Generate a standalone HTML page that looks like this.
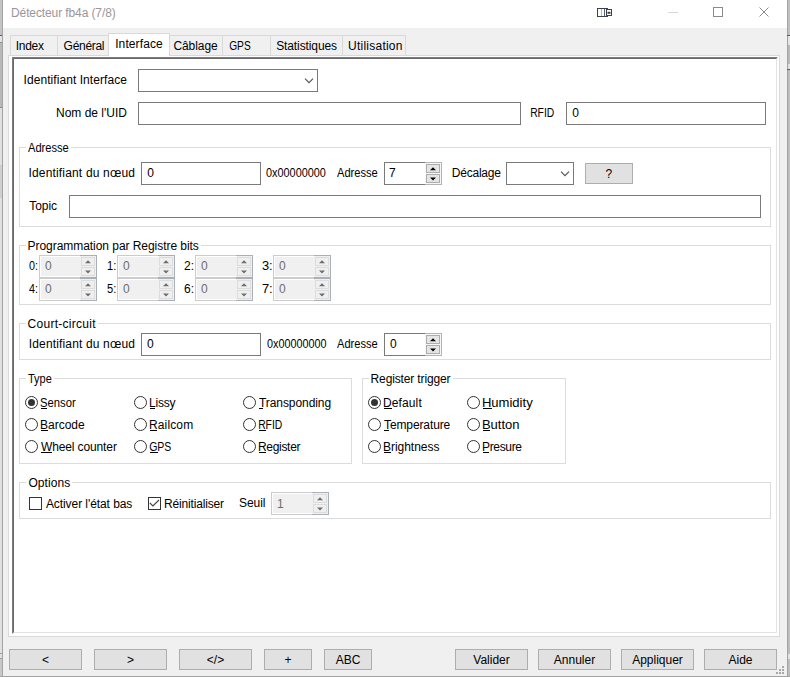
<!DOCTYPE html><html><head><meta charset="utf-8"><style>
html,body{margin:0;padding:0}body{width:790px;height:677px;position:relative;overflow:hidden;background:#f0f0f0;font-family:"Liberation Sans", sans-serif;font-size:12px;color:#000}
div,svg{position:absolute;box-sizing:border-box}.t{line-height:14px;white-space:nowrap}
</style></head><body>
<div style="left:0px;top:0px;width:2px;height:35px;background:#c4c4c4"></div>
<div style="left:0px;top:35px;width:2px;height:1px;background:#5c5c5c"></div>
<div style="left:0px;top:36px;width:2px;height:6px;background:#e2e2e2"></div>
<div style="left:0px;top:42px;width:2px;height:1px;background:#8c8c8c"></div>
<div style="left:0px;top:43px;width:2px;height:64px;background:#b8b8b8"></div>
<div style="left:0px;top:107px;width:2px;height:1px;background:#8c8c8c"></div>
<div style="left:0px;top:108px;width:2px;height:57px;background:#e0e0e0"></div>
<div style="left:0px;top:165px;width:2px;height:33px;background:#cfcfcf"></div>
<div style="left:0px;top:198px;width:2px;height:455px;background:#e0e0e0"></div>
<div style="left:0px;top:653px;width:2px;height:1px;background:#a0a0a0"></div>
<div style="left:0px;top:654px;width:2px;height:4px;background:#e0e0e0"></div>
<div style="left:0px;top:658px;width:2px;height:1px;background:#a0a0a0"></div>
<div style="left:0px;top:659px;width:2px;height:18px;background:#c8c8c8"></div>
<div style="left:2px;top:0px;width:1px;height:677px;background:#a4a4a4"></div>
<div style="left:788px;top:0px;width:2px;height:35px;background:#c0c0c0"></div>
<div style="left:787px;top:35px;width:3px;height:1px;background:#5c5c5c"></div>
<div style="left:788px;top:36px;width:2px;height:9px;background:#e4e4e4"></div>
<div style="left:788px;top:45px;width:2px;height:19px;background:#b8b8b8"></div>
<div style="left:788px;top:64px;width:2px;height:5px;background:#e0e0e0"></div>
<div style="left:787px;top:69px;width:3px;height:1px;background:#5c5c5c"></div>
<div style="left:788px;top:70px;width:2px;height:584px;background:#bdbdbd"></div>
<div style="left:788px;top:654px;width:2px;height:5px;background:#e2e2e2"></div>
<div style="left:788px;top:659px;width:2px;height:18px;background:#bdbdbd"></div>
<div style="left:787px;top:0px;width:1px;height:35px;background:#a4a4a4"></div>
<div style="left:787px;top:36px;width:1px;height:33px;background:#a4a4a4"></div>
<div style="left:787px;top:70px;width:1px;height:607px;background:#a4a4a4"></div>
<div style="left:0px;top:676px;width:790px;height:1px;background:#a4a4a4"></div>
<div style="left:3px;top:0px;width:784px;height:28px;background:#fff"></div>
<div class="t" style="left:11px;top:6px;color:#9c9696;letter-spacing:-0.105px;">Détecteur fb4a (7/8)</div>
<svg style="left:590px;top:0px" width="30" height="28" viewBox="0 0 30 28"><rect x="7.5" y="8.5" width="10" height="8" fill="#fff" stroke="#3c4150" stroke-width="1"/><line x1="11.5" y1="9" x2="11.5" y2="16" stroke="#b4b7bf" stroke-width="1"/><line x1="14.5" y1="9" x2="14.5" y2="16" stroke="#5a5e6b" stroke-width="1"/><rect x="16.5" y="9.5" width="5" height="6" fill="#fff" stroke="#3c4150" stroke-width="1"/><rect x="17.5" y="11.8" width="3" height="2" fill="#3c4150"/></svg>
<div style="left:668px;top:12px;width:10px;height:1px;background:#d8d8d8"></div>
<svg style="left:712px;top:6px" width="12" height="12" viewBox="0 0 12 12"><rect x="1.5" y="1.5" width="9" height="9" fill="none" stroke="#8a8a8a" stroke-width="1"/></svg>
<svg style="left:758px;top:6px" width="12" height="12" viewBox="0 0 12 12"><path d="M1.5 1.5 L10.5 10.5 M10.5 1.5 L1.5 10.5" fill="none" stroke="#8a8a8a" stroke-width="1"/></svg>
<div style="left:10px;top:35px;width:48px;height:22px;border:1px solid #d9d9d9;border-bottom:none;background:#f0f0f0"></div>
<div class="t" style="left:15.7px;top:39px;letter-spacing:-0.25px;">Index</div>
<div style="left:57px;top:35px;width:52px;height:22px;border:1px solid #d9d9d9;border-bottom:none;background:#f0f0f0"></div>
<div class="t" style="left:63.6px;top:39px;letter-spacing:-0.3px;">Général</div>
<div style="left:169px;top:35px;width:54px;height:22px;border:1px solid #d9d9d9;border-bottom:none;background:#f0f0f0"></div>
<div class="t" style="left:173.4px;top:39px;letter-spacing:-0.067px;">Câblage</div>
<div style="left:222px;top:35px;width:49px;height:22px;border:1px solid #d9d9d9;border-bottom:none;background:#f0f0f0"></div>
<div class="t" style="left:228.6px;top:39px;transform:scaleX(0.85);transform-origin:1px 0;">GPS</div>
<div style="left:270px;top:35px;width:73px;height:22px;border:1px solid #d9d9d9;border-bottom:none;background:#f0f0f0"></div>
<div class="t" style="left:276.2px;top:39px;letter-spacing:-0.109px;">Statistiques</div>
<div style="left:342px;top:35px;width:64px;height:22px;border:1px solid #d9d9d9;border-bottom:none;background:#f0f0f0"></div>
<div class="t" style="left:348.1px;top:39px;letter-spacing:0.23px;">Utilisation</div>
<div style="left:8px;top:55px;width:772px;height:582px;border:1px solid #d9d9d9;background:#fff"></div>
<div style="left:108px;top:33px;width:62px;height:23px;border:1px solid #d9d9d9;border-bottom:none;background:#fff"></div>
<div class="t" style="left:115.2px;top:37px;letter-spacing:0.1px;">Interface</div>
<div style="left:12px;top:57px;width:766px;height:577px;border-top:1px solid #7c7c7c;border-left:1px solid #7c7c7c;border-right:1px solid #fff;border-bottom:1px solid #fff"></div>
<div style="left:13px;top:58px;width:764px;height:575px;border-top:1px solid #696969;border-left:1px solid #696969;border-right:1px solid #e3e3e3;border-bottom:1px solid #e3e3e3"></div>
<div class="t" style="left:23.5px;top:73px;letter-spacing:0.07px;">Identifiant Interface</div>
<div style="left:138px;top:69px;width:180px;height:23px;border:1px solid #7a7a7a;background:#fff"></div>
<svg style="left:304px;top:76px" width="10" height="8" viewBox="0 0 10 8"><path d="M1 2.6 L5 6.6 L9 2.6" fill="none" stroke="#505050" stroke-width="1.1"/></svg>
<div class="t" style="left:56px;top:106px;">Nom de l'UID</div>
<div style="left:138px;top:102px;width:383px;height:23px;border:1px solid #7a7a7a;background:#fff"></div>
<div class="t" style="left:530.4px;top:106px;transform:scaleX(0.863);transform-origin:1px 0;">RFID</div>
<div style="left:566px;top:102px;width:200px;height:23px;border:1px solid #7a7a7a;background:#fff"></div>
<div class="t" style="left:572.3px;top:106px;">0</div>
<div style="left:19px;top:147px;width:752px;height:80px;border:1px solid #dcdcdc"></div>
<div style="left:26px;top:147px;width:45px;height:1px;background:#fff"></div>
<div class="t" style="left:28.2px;top:141px;transform:scaleX(0.925);transform-origin:0px 0;">Adresse</div>
<div class="t" style="left:28.5px;top:166px;letter-spacing:0.167px;">Identifiant du nœud</div>
<div style="left:141px;top:162px;width:120px;height:23px;border:1px solid #7a7a7a;background:#fff"></div>
<div class="t" style="left:147.2px;top:166px;">0</div>
<div class="t" style="left:266.2px;top:166px;transform:scaleX(0.9061);transform-origin:0px 0;">0x00000000</div>
<div class="t" style="left:337.3px;top:166px;transform:scaleX(0.925);transform-origin:0px 0;">Adresse</div>
<div style="left:384px;top:162px;width:58px;height:23px;border:1px solid #7a7a7a;background:#fff"></div>
<div style="left:425px;top:162px;width:17px;height:23px;border:1px solid #b4b4b4;border-left:none;background:#f7f7f7"></div>
<div style="left:426px;top:164px;width:14px;height:9px;border:1px solid #adadad;background:#e5e5e5"></div>
<div style="left:426px;top:174px;width:14px;height:9px;border:1px solid #adadad;background:#e5e5e5"></div>
<svg style="left:429.0px;top:167px" width="8" height="4" viewBox="0 0 8 4"><path d="M1 3.2 L4 0.2 L7 3.2 Z" fill="#000"/></svg>
<svg style="left:429.0px;top:177px" width="8" height="4" viewBox="0 0 8 4"><path d="M1 0.5 L4 3.5 L7 0.5 Z" fill="#000"/></svg>
<div class="t" style="left:389px;top:166px;">7</div>
<div class="t" style="left:451.7px;top:166px;letter-spacing:-0.2px;">Décalage</div>
<div style="left:506px;top:162px;width:68px;height:23px;border:1px solid #7a7a7a;background:#fff"></div>
<svg style="left:560px;top:169px" width="10" height="8" viewBox="0 0 10 8"><path d="M1 2.6 L5 6.6 L9 2.6" fill="none" stroke="#505050" stroke-width="1.1"/></svg>
<div style="left:585px;top:163px;width:48px;height:21px;border:1px solid #adadad;background:#e1e1e1"></div>
<div class="t" style="left:605.4px;top:167px;">?</div>
<div class="t" style="left:29.2px;top:199px;letter-spacing:-0.05px;">Topic</div>
<div style="left:69px;top:195px;width:692px;height:23px;border:1px solid #7a7a7a;background:#fff"></div>
<div style="left:19px;top:245px;width:752px;height:60px;border:1px solid #dcdcdc"></div>
<div style="left:26px;top:245px;width:175px;height:1px;background:#fff"></div>
<div class="t" style="left:27.6px;top:239px;letter-spacing:-0.05px;">Programmation par Registre bits</div>
<div class="t" style="left:29.1px;top:259px;transform:scaleX(0.9);transform-origin:0px 0;">0:</div>
<div style="left:39px;top:255px;width:58px;height:23px;border:1px solid #cccccc;background:#f0f0f0;box-shadow:inset 0 0 0 1px #fff"></div>
<div style="left:80px;top:255px;width:17px;height:23px;border:1px solid #aab0b8;border-left:none;background:#f0f0f0"></div>
<div style="left:81px;top:257px;width:14px;height:9px;border:1px solid #dcdcdc;background:#efefef"></div>
<div style="left:81px;top:267px;width:14px;height:9px;border:1px solid #dcdcdc;background:#efefef"></div>
<svg style="left:84.0px;top:260px" width="8" height="4" viewBox="0 0 8 4"><path d="M1 3.2 L4 0.2 L7 3.2 Z" fill="#6d6d6d"/></svg>
<svg style="left:84.0px;top:270px" width="8" height="4" viewBox="0 0 8 4"><path d="M1 0.5 L4 3.5 L7 0.5 Z" fill="#6d6d6d"/></svg>
<div class="t" style="left:45px;top:259px;color:#6d6d6d;">0</div>
<div class="t" style="left:106.9px;top:259px;transform:scaleX(0.925);transform-origin:1px 0;">1:</div>
<div style="left:117px;top:255px;width:58px;height:23px;border:1px solid #cccccc;background:#f0f0f0;box-shadow:inset 0 0 0 1px #fff"></div>
<div style="left:158px;top:255px;width:17px;height:23px;border:1px solid #aab0b8;border-left:none;background:#f0f0f0"></div>
<div style="left:159px;top:257px;width:14px;height:9px;border:1px solid #dcdcdc;background:#efefef"></div>
<div style="left:159px;top:267px;width:14px;height:9px;border:1px solid #dcdcdc;background:#efefef"></div>
<svg style="left:162.0px;top:260px" width="8" height="4" viewBox="0 0 8 4"><path d="M1 3.2 L4 0.2 L7 3.2 Z" fill="#6d6d6d"/></svg>
<svg style="left:162.0px;top:270px" width="8" height="4" viewBox="0 0 8 4"><path d="M1 0.5 L4 3.5 L7 0.5 Z" fill="#6d6d6d"/></svg>
<div class="t" style="left:123px;top:259px;color:#6d6d6d;">0</div>
<div class="t" style="left:184px;top:259px;letter-spacing:0.2px;">2:</div>
<div style="left:195px;top:255px;width:58px;height:23px;border:1px solid #cccccc;background:#f0f0f0;box-shadow:inset 0 0 0 1px #fff"></div>
<div style="left:236px;top:255px;width:17px;height:23px;border:1px solid #aab0b8;border-left:none;background:#f0f0f0"></div>
<div style="left:237px;top:257px;width:14px;height:9px;border:1px solid #dcdcdc;background:#efefef"></div>
<div style="left:237px;top:267px;width:14px;height:9px;border:1px solid #dcdcdc;background:#efefef"></div>
<svg style="left:240.0px;top:260px" width="8" height="4" viewBox="0 0 8 4"><path d="M1 3.2 L4 0.2 L7 3.2 Z" fill="#6d6d6d"/></svg>
<svg style="left:240.0px;top:270px" width="8" height="4" viewBox="0 0 8 4"><path d="M1 0.5 L4 3.5 L7 0.5 Z" fill="#6d6d6d"/></svg>
<div class="t" style="left:201px;top:259px;color:#6d6d6d;">0</div>
<div class="t" style="left:261.8px;top:259px;transform:scaleX(1.075);transform-origin:1px 0;">3:</div>
<div style="left:273px;top:255px;width:58px;height:23px;border:1px solid #cccccc;background:#f0f0f0;box-shadow:inset 0 0 0 1px #fff"></div>
<div style="left:314px;top:255px;width:17px;height:23px;border:1px solid #aab0b8;border-left:none;background:#f0f0f0"></div>
<div style="left:315px;top:257px;width:14px;height:9px;border:1px solid #dcdcdc;background:#efefef"></div>
<div style="left:315px;top:267px;width:14px;height:9px;border:1px solid #dcdcdc;background:#efefef"></div>
<svg style="left:318.0px;top:260px" width="8" height="4" viewBox="0 0 8 4"><path d="M1 3.2 L4 0.2 L7 3.2 Z" fill="#6d6d6d"/></svg>
<svg style="left:318.0px;top:270px" width="8" height="4" viewBox="0 0 8 4"><path d="M1 0.5 L4 3.5 L7 0.5 Z" fill="#6d6d6d"/></svg>
<div class="t" style="left:279px;top:259px;color:#6d6d6d;">0</div>
<div class="t" style="left:29.1px;top:282px;transform:scaleX(0.9);transform-origin:0px 0;">4:</div>
<div style="left:39px;top:278px;width:58px;height:23px;border:1px solid #cccccc;background:#f0f0f0;box-shadow:inset 0 0 0 1px #fff"></div>
<div style="left:80px;top:278px;width:17px;height:23px;border:1px solid #aab0b8;border-left:none;background:#f0f0f0"></div>
<div style="left:81px;top:280px;width:14px;height:9px;border:1px solid #dcdcdc;background:#efefef"></div>
<div style="left:81px;top:290px;width:14px;height:9px;border:1px solid #dcdcdc;background:#efefef"></div>
<svg style="left:84.0px;top:283px" width="8" height="4" viewBox="0 0 8 4"><path d="M1 3.2 L4 0.2 L7 3.2 Z" fill="#6d6d6d"/></svg>
<svg style="left:84.0px;top:293px" width="8" height="4" viewBox="0 0 8 4"><path d="M1 0.5 L4 3.5 L7 0.5 Z" fill="#6d6d6d"/></svg>
<div class="t" style="left:45px;top:282px;color:#6d6d6d;">0</div>
<div class="t" style="left:106.9px;top:282px;transform:scaleX(0.925);transform-origin:1px 0;">5:</div>
<div style="left:117px;top:278px;width:58px;height:23px;border:1px solid #cccccc;background:#f0f0f0;box-shadow:inset 0 0 0 1px #fff"></div>
<div style="left:158px;top:278px;width:17px;height:23px;border:1px solid #aab0b8;border-left:none;background:#f0f0f0"></div>
<div style="left:159px;top:280px;width:14px;height:9px;border:1px solid #dcdcdc;background:#efefef"></div>
<div style="left:159px;top:290px;width:14px;height:9px;border:1px solid #dcdcdc;background:#efefef"></div>
<svg style="left:162.0px;top:283px" width="8" height="4" viewBox="0 0 8 4"><path d="M1 3.2 L4 0.2 L7 3.2 Z" fill="#6d6d6d"/></svg>
<svg style="left:162.0px;top:293px" width="8" height="4" viewBox="0 0 8 4"><path d="M1 0.5 L4 3.5 L7 0.5 Z" fill="#6d6d6d"/></svg>
<div class="t" style="left:123px;top:282px;color:#6d6d6d;">0</div>
<div class="t" style="left:184px;top:282px;letter-spacing:0.2px;">6:</div>
<div style="left:195px;top:278px;width:58px;height:23px;border:1px solid #cccccc;background:#f0f0f0;box-shadow:inset 0 0 0 1px #fff"></div>
<div style="left:236px;top:278px;width:17px;height:23px;border:1px solid #aab0b8;border-left:none;background:#f0f0f0"></div>
<div style="left:237px;top:280px;width:14px;height:9px;border:1px solid #dcdcdc;background:#efefef"></div>
<div style="left:237px;top:290px;width:14px;height:9px;border:1px solid #dcdcdc;background:#efefef"></div>
<svg style="left:240.0px;top:283px" width="8" height="4" viewBox="0 0 8 4"><path d="M1 3.2 L4 0.2 L7 3.2 Z" fill="#6d6d6d"/></svg>
<svg style="left:240.0px;top:293px" width="8" height="4" viewBox="0 0 8 4"><path d="M1 0.5 L4 3.5 L7 0.5 Z" fill="#6d6d6d"/></svg>
<div class="t" style="left:201px;top:282px;color:#6d6d6d;">0</div>
<div class="t" style="left:261.8px;top:282px;transform:scaleX(1.075);transform-origin:1px 0;">7:</div>
<div style="left:273px;top:278px;width:58px;height:23px;border:1px solid #cccccc;background:#f0f0f0;box-shadow:inset 0 0 0 1px #fff"></div>
<div style="left:314px;top:278px;width:17px;height:23px;border:1px solid #aab0b8;border-left:none;background:#f0f0f0"></div>
<div style="left:315px;top:280px;width:14px;height:9px;border:1px solid #dcdcdc;background:#efefef"></div>
<div style="left:315px;top:290px;width:14px;height:9px;border:1px solid #dcdcdc;background:#efefef"></div>
<svg style="left:318.0px;top:283px" width="8" height="4" viewBox="0 0 8 4"><path d="M1 3.2 L4 0.2 L7 3.2 Z" fill="#6d6d6d"/></svg>
<svg style="left:318.0px;top:293px" width="8" height="4" viewBox="0 0 8 4"><path d="M1 0.5 L4 3.5 L7 0.5 Z" fill="#6d6d6d"/></svg>
<div class="t" style="left:279px;top:282px;color:#6d6d6d;">0</div>
<div style="left:19px;top:323px;width:752px;height:37px;border:1px solid #dcdcdc"></div>
<div style="left:26px;top:323px;width:72px;height:1px;background:#fff"></div>
<div class="t" style="left:27.6px;top:317px;letter-spacing:0.275px;">Court-circuit</div>
<div class="t" style="left:28.8px;top:337px;letter-spacing:0.15px;">Identifiant du nœud</div>
<div style="left:141px;top:333px;width:120px;height:23px;border:1px solid #7a7a7a;background:#fff"></div>
<div class="t" style="left:147px;top:337px;">0</div>
<div class="t" style="left:266.5px;top:337px;transform:scaleX(0.9015);transform-origin:0px 0;">0x00000000</div>
<div class="t" style="left:337.3px;top:337px;transform:scaleX(0.925);transform-origin:0px 0;">Adresse</div>
<div style="left:384px;top:333px;width:58px;height:23px;border:1px solid #7a7a7a;background:#fff"></div>
<div style="left:425px;top:333px;width:17px;height:23px;border:1px solid #b4b4b4;border-left:none;background:#f7f7f7"></div>
<div style="left:426px;top:335px;width:14px;height:9px;border:1px solid #adadad;background:#e5e5e5"></div>
<div style="left:426px;top:345px;width:14px;height:9px;border:1px solid #adadad;background:#e5e5e5"></div>
<svg style="left:429.0px;top:338px" width="8" height="4" viewBox="0 0 8 4"><path d="M1 3.2 L4 0.2 L7 3.2 Z" fill="#000"/></svg>
<svg style="left:429.0px;top:348px" width="8" height="4" viewBox="0 0 8 4"><path d="M1 0.5 L4 3.5 L7 0.5 Z" fill="#000"/></svg>
<div class="t" style="left:390px;top:337px;">0</div>
<div style="left:19px;top:378px;width:333px;height:86px;border:1px solid #dcdcdc"></div>
<div style="left:26px;top:378px;width:28px;height:1px;background:#fff"></div>
<div class="t" style="left:28.2px;top:372px;transform:scaleX(0.9154);transform-origin:0px 0;">Type</div>
<svg style="left:25px;top:396px" width="13" height="13" viewBox="0 0 13 13"><circle cx="6.5" cy="6.5" r="6" fill="#fff" stroke="#333" stroke-width="1"/><circle cx="6.5" cy="6.5" r="3.5" fill="#333"/></svg>
<div class="t" style="left:40px;top:396px;transform:scaleX(0.9378);transform-origin:1px 0;">Sensor</div>
<div style="left:41px;top:408px;width:6px;height:1px;background:#000"></div>
<svg style="left:134px;top:396px" width="13" height="13" viewBox="0 0 13 13"><circle cx="6.5" cy="6.5" r="6" fill="#fff" stroke="#333" stroke-width="1"/></svg>
<div class="t" style="left:149px;top:396px;letter-spacing:-0.225px;">Lissy</div>
<div style="left:150px;top:408px;width:5px;height:1px;background:#000"></div>
<svg style="left:243px;top:396px" width="13" height="13" viewBox="0 0 13 13"><circle cx="6.5" cy="6.5" r="6" fill="#fff" stroke="#333" stroke-width="1"/></svg>
<div class="t" style="left:259px;top:396px;letter-spacing:-0.073px;">Transponding</div>
<div style="left:259px;top:408px;width:4px;height:1px;background:#000"></div>
<svg style="left:25px;top:418px" width="13" height="13" viewBox="0 0 13 13"><circle cx="6.5" cy="6.5" r="6" fill="#fff" stroke="#333" stroke-width="1"/></svg>
<div class="t" style="left:40px;top:418px;">Barcode</div>
<div style="left:41px;top:430px;width:7px;height:1px;background:#000"></div>
<svg style="left:134px;top:418px" width="13" height="13" viewBox="0 0 13 13"><circle cx="6.5" cy="6.5" r="6" fill="#fff" stroke="#333" stroke-width="1"/></svg>
<div class="t" style="left:149px;top:418px;letter-spacing:0.133px;">Railcom</div>
<div style="left:150px;top:430px;width:7px;height:1px;background:#000"></div>
<svg style="left:243px;top:418px" width="13" height="13" viewBox="0 0 13 13"><circle cx="6.5" cy="6.5" r="6" fill="#fff" stroke="#333" stroke-width="1"/></svg>
<div class="t" style="left:258px;top:418px;transform:scaleX(0.863);transform-origin:1px 0;">RFID</div>
<div style="left:259px;top:430px;width:7px;height:1px;background:#000"></div>
<svg style="left:25px;top:440px" width="13" height="13" viewBox="0 0 13 13"><circle cx="6.5" cy="6.5" r="6" fill="#fff" stroke="#333" stroke-width="1"/></svg>
<div class="t" style="left:41px;top:440px;letter-spacing:-0.125px;">Wheel counter</div>
<div style="left:41px;top:452px;width:11px;height:1px;background:#000"></div>
<svg style="left:134px;top:440px" width="13" height="13" viewBox="0 0 13 13"><circle cx="6.5" cy="6.5" r="6" fill="#fff" stroke="#333" stroke-width="1"/></svg>
<div class="t" style="left:149px;top:440px;transform:scaleX(0.875);transform-origin:1px 0;">GPS</div>
<div style="left:150px;top:452px;width:8px;height:1px;background:#000"></div>
<svg style="left:243px;top:440px" width="13" height="13" viewBox="0 0 13 13"><circle cx="6.5" cy="6.5" r="6" fill="#fff" stroke="#333" stroke-width="1"/></svg>
<div class="t" style="left:258px;top:440px;letter-spacing:-0.314px;">Register</div>
<div style="left:259px;top:452px;width:7px;height:1px;background:#000"></div>
<div style="left:362px;top:378px;width:204px;height:86px;border:1px solid #dcdcdc"></div>
<div style="left:369px;top:378px;width:84px;height:1px;background:#fff"></div>
<div class="t" style="left:370.6px;top:372px;letter-spacing:-0.14px;">Register trigger</div>
<svg style="left:368px;top:396px" width="13" height="13" viewBox="0 0 13 13"><circle cx="6.5" cy="6.5" r="6" fill="#fff" stroke="#333" stroke-width="1"/><circle cx="6.5" cy="6.5" r="3.5" fill="#333"/></svg>
<div class="t" style="left:383px;top:396px;letter-spacing:0.117px;">Default</div>
<div style="left:384px;top:408px;width:8px;height:1px;background:#000"></div>
<svg style="left:467px;top:396px" width="13" height="13" viewBox="0 0 13 13"><circle cx="6.5" cy="6.5" r="6" fill="#fff" stroke="#333" stroke-width="1"/></svg>
<div class="t" style="left:482px;top:396px;transform:scaleX(1.087);transform-origin:1px 0;">Humidity</div>
<div style="left:483px;top:408px;width:9px;height:1px;background:#000"></div>
<svg style="left:368px;top:418px" width="13" height="13" viewBox="0 0 13 13"><circle cx="6.5" cy="6.5" r="6" fill="#fff" stroke="#333" stroke-width="1"/></svg>
<div class="t" style="left:384px;top:418px;letter-spacing:-0.11px;">Temperature</div>
<div style="left:384px;top:430px;width:5px;height:1px;background:#000"></div>
<svg style="left:467px;top:418px" width="13" height="13" viewBox="0 0 13 13"><circle cx="6.5" cy="6.5" r="6" fill="#fff" stroke="#333" stroke-width="1"/></svg>
<div class="t" style="left:482px;top:418px;transform:scaleX(1.0818);transform-origin:1px 0;">Button</div>
<div style="left:483px;top:430px;width:7px;height:1px;background:#000"></div>
<svg style="left:368px;top:440px" width="13" height="13" viewBox="0 0 13 13"><circle cx="6.5" cy="6.5" r="6" fill="#fff" stroke="#333" stroke-width="1"/></svg>
<div class="t" style="left:383px;top:440px;letter-spacing:-0.033px;">Brightness</div>
<div style="left:384px;top:452px;width:7px;height:1px;background:#000"></div>
<svg style="left:467px;top:440px" width="13" height="13" viewBox="0 0 13 13"><circle cx="6.5" cy="6.5" r="6" fill="#fff" stroke="#333" stroke-width="1"/></svg>
<div class="t" style="left:482px;top:440px;letter-spacing:-0.333px;">Presure</div>
<div style="left:483px;top:452px;width:6px;height:1px;background:#000"></div>
<div style="left:19px;top:482px;width:752px;height:37px;border:1px solid #dcdcdc"></div>
<div style="left:26px;top:482px;width:46px;height:1px;background:#fff"></div>
<div class="t" style="left:28.4px;top:476px;letter-spacing:0.083px;">Options</div>
<svg style="left:29px;top:497px" width="13" height="13" viewBox="0 0 13 13"><rect x="0.5" y="0.5" width="12" height="12" fill="#fff" stroke="#333" stroke-width="1"/></svg>
<div class="t" style="left:45.9px;top:497px;letter-spacing:-0.071px;">Activer l'état bas</div>
<svg style="left:148px;top:497px" width="13" height="13" viewBox="0 0 13 13"><rect x="0.5" y="0.5" width="12" height="12" fill="#fff" stroke="#333" stroke-width="1"/><path d="M1.9 6 L4.9 9 L11 3" fill="none" stroke="#444" stroke-width="1.15"/></svg>
<div class="t" style="left:164px;top:497px;letter-spacing:-0.167px;">Réinitialiser</div>
<div class="t" style="left:239px;top:496px;letter-spacing:-0.075px;">Seuil</div>
<div style="left:271px;top:492px;width:58px;height:23px;border:1px solid #cccccc;background:#f0f0f0;box-shadow:inset 0 0 0 1px #fff"></div>
<div style="left:312px;top:492px;width:17px;height:23px;border:1px solid #aab0b8;border-left:none;background:#f0f0f0"></div>
<div style="left:313px;top:494px;width:14px;height:9px;border:1px solid #dcdcdc;background:#efefef"></div>
<div style="left:313px;top:504px;width:14px;height:9px;border:1px solid #dcdcdc;background:#efefef"></div>
<svg style="left:316.0px;top:497px" width="8" height="4" viewBox="0 0 8 4"><path d="M1 3.2 L4 0.2 L7 3.2 Z" fill="#6d6d6d"/></svg>
<svg style="left:316.0px;top:507px" width="8" height="4" viewBox="0 0 8 4"><path d="M1 0.5 L4 3.5 L7 0.5 Z" fill="#6d6d6d"/></svg>
<div class="t" style="left:277px;top:497px;color:#6d6d6d;">1</div>
<div style="left:9px;top:649px;width:73px;height:21px;border:1px solid #adadad;background:#e1e1e1"></div>
<div class="t" style="left:9px;top:653px;width:73px;text-align:center">&lt;</div>
<div style="left:94px;top:649px;width:73px;height:21px;border:1px solid #adadad;background:#e1e1e1"></div>
<div class="t" style="left:94px;top:653px;width:73px;text-align:center">&gt;</div>
<div style="left:179px;top:649px;width:73px;height:21px;border:1px solid #adadad;background:#e1e1e1"></div>
<div class="t" style="left:179px;top:653px;width:73px;text-align:center">&lt;/&gt;</div>
<div style="left:264px;top:649px;width:48px;height:21px;border:1px solid #adadad;background:#e1e1e1"></div>
<div class="t" style="left:264px;top:653px;width:48px;text-align:center">+</div>
<div style="left:324px;top:649px;width:48px;height:21px;border:1px solid #adadad;background:#e1e1e1"></div>
<div class="t" style="left:324px;top:653px;width:48px;text-align:center">ABC</div>
<div style="left:455px;top:649px;width:73px;height:21px;border:1px solid #adadad;background:#e1e1e1"></div>
<div class="t" style="left:455px;top:653px;width:73px;text-align:center">Valider</div>
<div style="left:538px;top:649px;width:73px;height:21px;border:1px solid #adadad;background:#e1e1e1"></div>
<div class="t" style="left:538px;top:653px;width:73px;text-align:center">Annuler</div>
<div style="left:621px;top:649px;width:73px;height:21px;border:1px solid #adadad;background:#e1e1e1"></div>
<div class="t" style="left:621px;top:653px;width:73px;text-align:center">Appliquer</div>
<div style="left:704px;top:649px;width:73px;height:21px;border:1px solid #adadad;background:#e1e1e1"></div>
<div class="t" style="left:704px;top:653px;width:73px;text-align:center">Aide</div>
<div style="left:782px;top:666px;width:2px;height:2px;background:#a8a8a8"></div>
<div style="left:779px;top:669px;width:2px;height:2px;background:#a8a8a8"></div>
<div style="left:782px;top:669px;width:2px;height:2px;background:#a8a8a8"></div>
<div style="left:776px;top:672px;width:2px;height:2px;background:#a8a8a8"></div>
<div style="left:779px;top:672px;width:2px;height:2px;background:#a8a8a8"></div>
<div style="left:782px;top:672px;width:2px;height:2px;background:#a8a8a8"></div>
</body></html>
